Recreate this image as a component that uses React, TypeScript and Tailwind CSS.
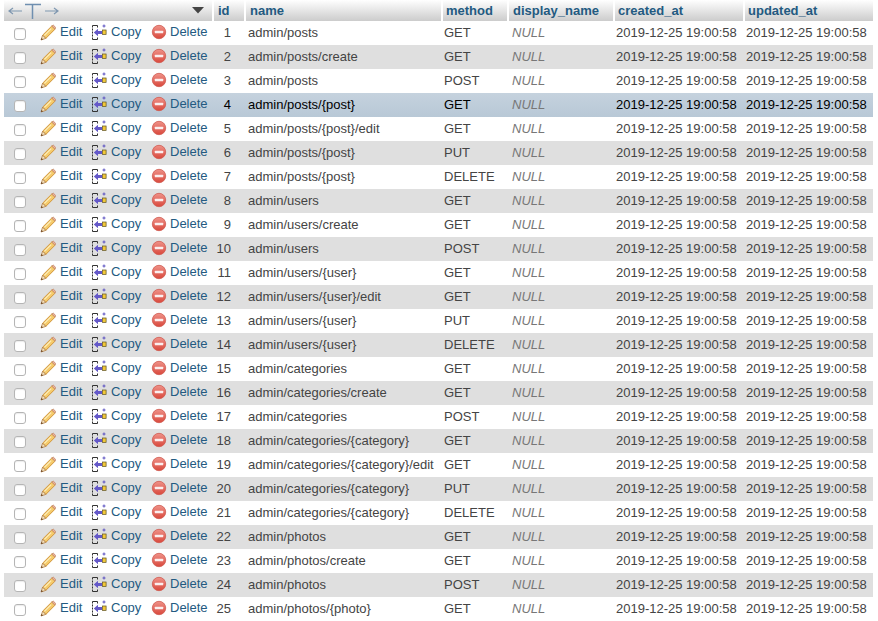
const rows: [number, string, string][] = [
  [1, "admin/posts", "GET"],
  [2, "admin/posts/create", "GET"],
  [3, "admin/posts", "POST"],
  [4, "admin/posts/{post}", "GET"],
  [5, "admin/posts/{post}/edit", "GET"],
  [6, "admin/posts/{post}", "PUT"],
  [7, "admin/posts/{post}", "DELETE"],
  [8, "admin/users", "GET"],
  [9, "admin/users/create", "GET"],
  [10, "admin/users", "POST"],
  [11, "admin/users/{user}", "GET"],
  [12, "admin/users/{user}/edit", "GET"],
  [13, "admin/users/{user}", "PUT"],
  [14, "admin/users/{user}", "DELETE"],
  [15, "admin/categories", "GET"],
  [16, "admin/categories/create", "GET"],
  [17, "admin/categories", "POST"],
  [18, "admin/categories/{category}", "GET"],
  [19, "admin/categories/{category}/edit", "GET"],
  [20, "admin/categories/{category}", "PUT"],
  [21, "admin/categories/{category}", "DELETE"],
  [22, "admin/photos", "GET"],
  [23, "admin/photos/create", "GET"],
  [24, "admin/photos", "POST"],
  [25, "admin/photos/{photo}", "GET"],
];

function Pencil() {
  return (
    <svg width="16" height="17" viewBox="0 0 16 17" className="shrink-0">
      <path d="M11.8 2 L15 5.2 L5.8 14.4 L2.6 11.2 Z" fill="#f5cb6c" stroke="#d2963c" strokeWidth="1" />
      <path d="M11.8 2 L13.2 1 L15.8 3.6 L15 5.2 Z" fill="#eeb29c" stroke="#c08a68" strokeWidth="0.8" />
      <path d="M2.6 11.2 L5.8 14.4 L1 16 Z" fill="#f5e2bb" stroke="#ad7a45" strokeWidth="0.8" />
      <path d="M1.6 14 L3 15.3 L1 16 Z" fill="#5b3a1c" />
      <path d="M11.2 4.6 L4.4 11.4" stroke="#fcedbb" strokeWidth="1.2" />
    </svg>
  );
}

function CopyIcon() {
  return (
    <svg width="16" height="17" viewBox="0 0 16 17" className="shrink-0">
      <path d="M1.5 1.5 H6.5 M1.5 15.5 H6.5" fill="none" stroke="#333" strokeWidth="1" />
      <path d="M1.5 1.5 V15.5" fill="none" stroke="#333" strokeWidth="1" strokeDasharray="2 1" />
      <path d="M6.5 1.5 V3.5 M6.5 13.5 V15.5" fill="none" stroke="#333" strokeWidth="1" />
      <path d="M2.8 8.5 L7 4.8 V7 H11 V10 H7 V12.2 Z" fill="#6458c8" />
      <rect x="11.5" y="6" width="3.6" height="4.4" fill="#f2c83a" stroke="#5e5220" strokeWidth="0.7" />
      <path d="M13 0.5 V3.5 M11.5 2 H14.5" stroke="#5a50c0" strokeWidth="1" />
    </svg>
  );
}

function DeleteIcon() {
  return (
    <svg width="16" height="16" viewBox="0 0 16 16" className="shrink-0">
      <defs>
        <linearGradient id="dg" x1="0" y1="0" x2="0" y2="1">
          <stop offset="0" stopColor="#ef9289" />
          <stop offset="1" stopColor="#d9483c" />
        </linearGradient>
      </defs>
      <circle cx="8" cy="8" r="6.7" fill="url(#dg)" stroke="#cf5a50" strokeWidth="0.8" />
      <rect x="3.8" y="6.7" width="8.4" height="2.6" rx="0.5" fill="#fbeeee" />
    </svg>
  );
}

function Th({ w, pad, children }: { w: string; pad: string; children?: React.ReactNode }) {
  return (
    <div className={`${w} ${pad} shrink-0 flex items-center h-full text-[#235a81] font-bold border-l-2 border-white`}>
      {children}
    </div>
  );
}

export default function App() {
  return (
    <div className="w-[878px] h-[621px] overflow-hidden bg-white pl-[4px] text-[13px] text-[#444] font-['Liberation_Sans',Arial,sans-serif]">
      <div className="w-[869px] h-[21px] flex bg-gradient-to-b from-white to-[#cccccc]">
        <div className="w-[208px] shrink-0 flex items-center justify-between pl-[4px] pr-[3px]">
          <svg width="52" height="20" viewBox="0 0 52 20">
            <path d="M14 10 H1 M5 7 L1 10 L5 13" fill="none" stroke="#7f97b0" strokeWidth="1.2" />
            <path d="M17 3.5 H33 M24.5 3.5 V18" fill="none" stroke="#6f8fb0" strokeWidth="1.5" />
            <path d="M37 10 H50 M46 7 L50 10 L46 13" fill="none" stroke="#7f97b0" strokeWidth="1.2" />
          </svg>
          <svg width="12" height="7" viewBox="0 0 12 7" className="mr-[5px]">
            <path d="M0 0 H12 L6 6.5 Z" fill="#444" />
          </svg>
        </div>
        <Th w="w-[32px]" pad="pl-[4px]">id</Th>
        <Th w="w-[197px]" pad="pl-[4px]">name</Th>
        <Th w="w-[66px]" pad="pl-[3px]">method</Th>
        <Th w="w-[106px]" pad="pl-[4px]">display_name</Th>
        <Th w="w-[130px]" pad="pl-[3px]">created_at</Th>
        <Th w="w-[130px]" pad="pl-[3px]">updated_at</Th>
      </div>
      {rows.map(([id, name, method], i) => {
        const hover = id === 4;
        const bg = hover ? "bg-gradient-to-b from-[#c5d2de] to-[#b8c8d6] text-black" : i % 2 === 1 ? "bg-[#dfdfdf]" : "bg-white";
        return (
          <div key={id} className={`w-[869px] h-[24px] flex items-center ${bg}`}>
            <div className="w-[36px] shrink-0 flex items-center pl-[10px] pt-[2px]">
              <span className="w-[12px] h-[12px] rounded-[3px] bg-white border border-[#b5b5b5] shadow-[inset_0_1px_1px_rgba(0,0,0,0.08)]" />
            </div>
            <div className="w-[172px] shrink-0 flex items-center text-[#235a81] -mt-[2px]">
              <Pencil />
              <span className="ml-[4px] w-[31px]">Edit</span>
              <CopyIcon />
              <span className="ml-[4px] w-[40px]">Copy</span>
              <DeleteIcon />
              <span className="ml-[3px]">Delete</span>
            </div>
            <div className="w-[32px] shrink-0 pr-[13px] text-right">{id}</div>
            <div className="w-[197px] shrink-0 pl-[4px] whitespace-nowrap">{name}</div>
            <div className="w-[66px] shrink-0 pl-[3px]">{method}</div>
            <div className="w-[106px] shrink-0 pl-[5px] italic text-[#777]">NULL</div>
            <div className="w-[130px] shrink-0 pl-[3px] whitespace-nowrap">2019-12-25 19:00:58</div>
            <div className="w-[130px] shrink-0 pl-[3px] whitespace-nowrap">2019-12-25 19:00:58</div>
          </div>
        );
      })}
    </div>
  );
}
